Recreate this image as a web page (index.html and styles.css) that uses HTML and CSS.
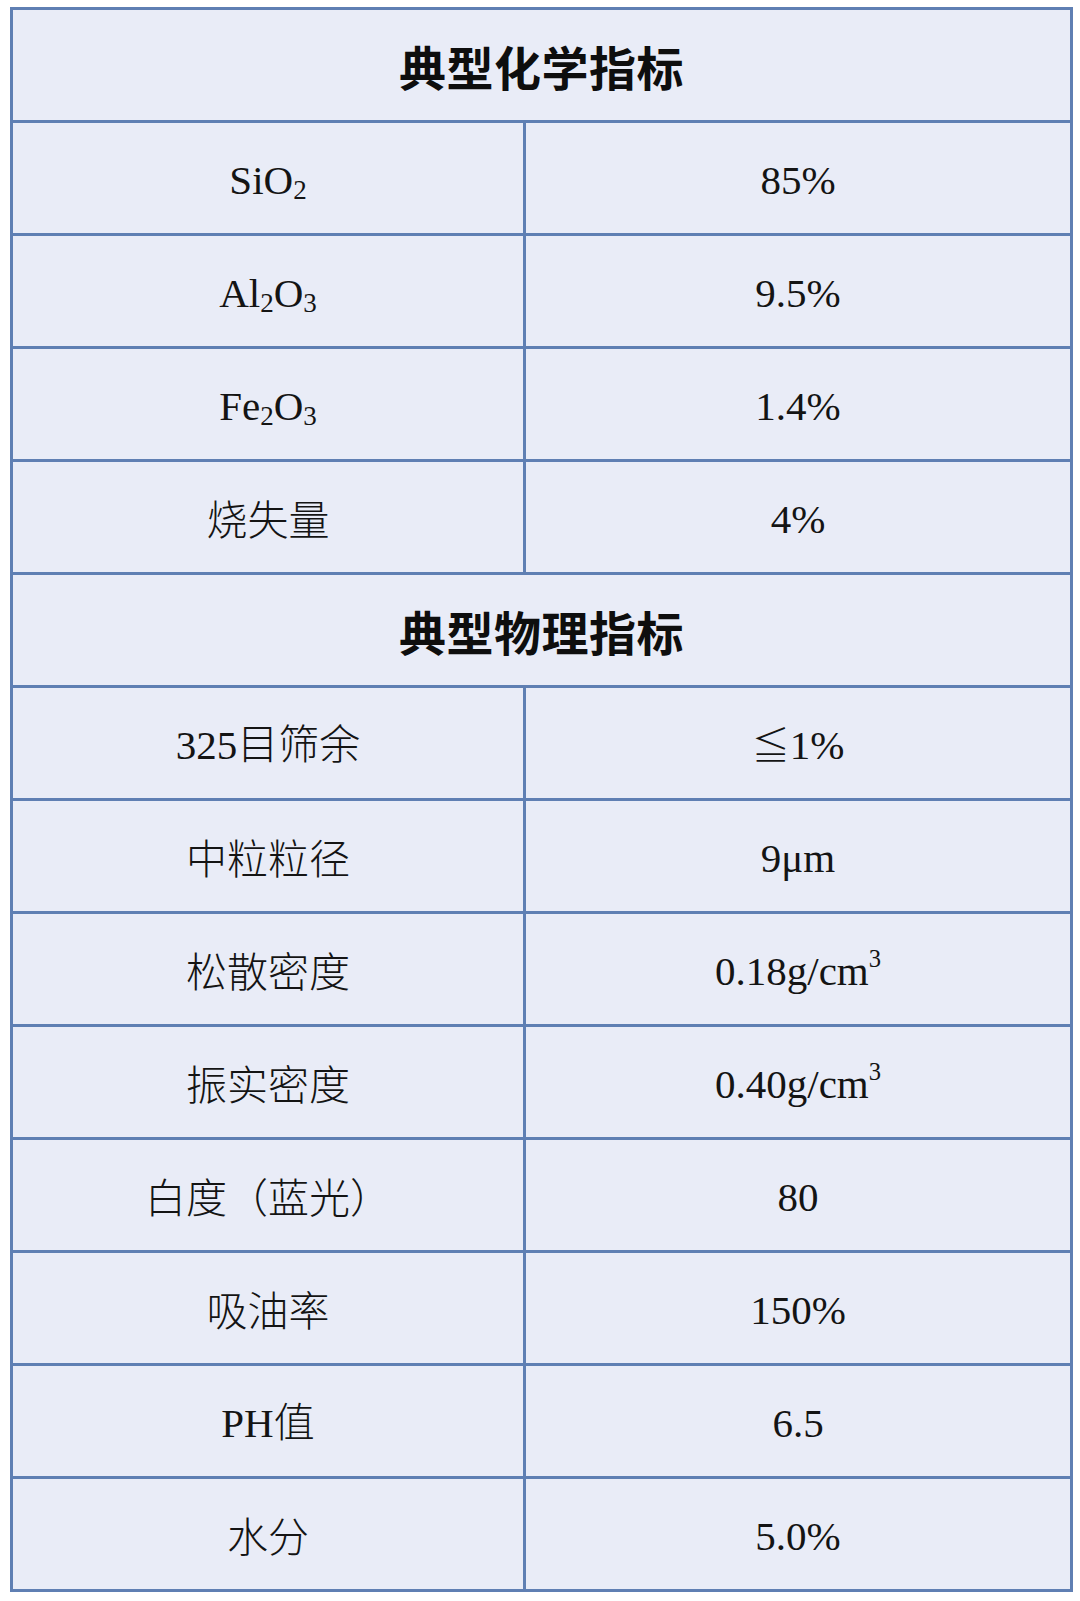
FILE: index.html
```html
<!DOCTYPE html>
<html lang="zh">
<head>
<meta charset="utf-8">
<link rel="stylesheet" href="styles.css">
</head>
<body>
<table class="spec">
  <colgroup><col class="c1"><col class="c2"></colgroup>
  <tbody>
    <tr><th colspan="2" class="head">典型化学指标</th></tr>
    <tr><td><span class="lat">SiO<sub>2</sub></span></td><td><span class="lat">85%</span></td></tr>
    <tr><td><span class="lat">Al<sub>2</sub>O<sub>3</sub></span></td><td><span class="lat">9.5%</span></td></tr>
    <tr><td><span class="lat">Fe<sub>2</sub>O<sub>3</sub></span></td><td><span class="lat">1.4%</span></td></tr>
    <tr><td>烧失量</td><td><span class="lat">4%</span></td></tr>
    <tr><th colspan="2" class="head">典型物理指标</th></tr>
    <tr><td><span class="lat iso" lang="en">325</span>目筛余</td><td><span class="sym">≦</span><span class="lat iso" lang="en">1%</span></td></tr>
    <tr><td>中粒粒径</td><td><span class="lat">9μm</span></td></tr>
    <tr><td>松散密度</td><td><span class="lat">0.18g/cm<sup>3</sup></span></td></tr>
    <tr><td>振实密度</td><td><span class="lat">0.40g/cm<sup>3</sup></span></td></tr>
    <tr><td>白度（蓝光）</td><td><span class="lat">80</span></td></tr>
    <tr><td>吸油率</td><td><span class="lat">150%</span></td></tr>
    <tr><td><span class="lat iso" lang="en">PH</span>值</td><td><span class="lat">6.5</span></td></tr>
    <tr><td>水分</td><td><span class="lat">5.0%</span></td></tr>
  </tbody>
</table>
</body>
</html>
```

FILE: styles.css
```css
html, body {
  margin: 0;
  padding: 0;
  background: #ffffff;
}
body {
  padding: 7px 0 0 10px;
}
.spec {
  border-collapse: collapse;
  width: 1060px;
  table-layout: fixed;
  background: #e9ecf7;
  border: 3px solid #5f7fb3;
  color: #141414;
}
.c1 { width: 513px; }
.c2 { width: 547px; }
.spec tr {
  height: 113px;
}
.spec td, .spec th {
  border: 3px solid #5f7fb3;
  text-align: center;
  vertical-align: middle;
  padding: 0;
  line-height: 1;
}
.spec td {
  font-family: "Noto Sans CJK SC", sans-serif;
  font-size: 41px;
  font-weight: 300;
}
.spec .lat {
  font-family: "Liberation Serif", serif;
  font-weight: 400;
  font-size: 41px;
}
.spec .iso {
  display: inline-block;
}
.spec .sym {
  font-family: "Noto Sans CJK SC", sans-serif;
  font-weight: 300;
  font-size: 38px;
}
.spec th.head {
  font-family: "Noto Sans CJK SC", sans-serif;
  font-weight: 700;
  font-size: 47px;
  letter-spacing: 0.5px;
  color: #0e0e0e;
}
.spec sub {
  font-size: 0.66em;
  vertical-align: -0.18em;
  line-height: 0;
}
.spec sup {
  font-size: 0.6em;
  vertical-align: 0.75em;
  line-height: 0;
}
```
